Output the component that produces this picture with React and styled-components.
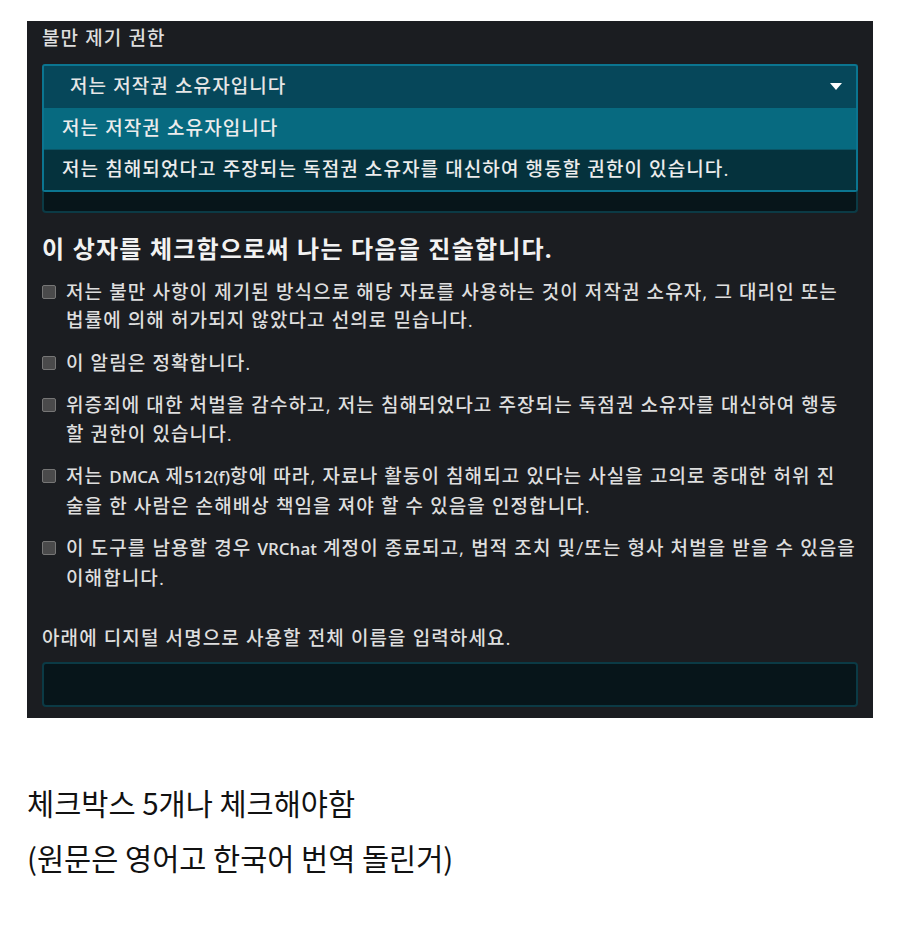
import styled, { createGlobalStyle } from "styled-components";

const GlobalStyle = createGlobalStyle`
  body {
    margin: 0;
    background: #ffffff;
  }
`;

const options = [
  "저는 저작권 소유자입니다",
  "저는 침해되었다고 주장되는 독점권 소유자를 대신하여 행동할 권한이 있습니다.",
];

export default function App() {
  const items = [
    <>
      저는 불만 사항이 제기된 방식으로 해당 자료를 사용하는 것이 저작권 소유자, 그 대리인 또는
      <br />
      법률에 의해 허가되지 않았다고 선의로 믿습니다.
    </>,
    "이 알림은 정확합니다.",
    <>
      위증죄에 대한 처벌을 감수하고, 저는 침해되었다고 주장되는 독점권 소유자를 대신하여 행동
      <br />할 권한이 있습니다.
    </>,
    <>
      저는 <Latin>DMCA</Latin> 제<Latin>512(f)</Latin>항에 따라, 자료나 활동이 침해되고 있다는 사실을 고의로 중대한 허위 진
      <br />
      술을 한 사람은 손해배상 책임을 져야 할 수 있음을 인정합니다.
    </>,
    <>
      이 도구를 남용할 경우 <Latin>VRChat</Latin> 계정이 종료되고, 법적 조치 및/또는 형사 처벌을 받을 수 있음을
      <br />
      이해합니다.
    </>,
  ];

  return (
    <>
      <GlobalStyle />
      <Panel>
        <Label>불만 제기 권한</Label>
        <SelectWrap>
          <SelectBox>
            <span>{options[0]}</span>
            <Caret />
          </SelectBox>
          <Menu>
            {options.map((o, i) => (
              <Option key={o} $active={i === 0}>
                {o}
              </Option>
            ))}
          </Menu>
          <HiddenField />
        </SelectWrap>

        <Heading>이 상자를 체크함으로써 나는 다음을 진술합니다.</Heading>
        <List>
          {items.map((t, i) => (
            <Item key={i}>
              <Box />
              <Text>{t}</Text>
            </Item>
          ))}
        </List>

        <SignLabel>아래에 디지털 서명으로 사용할 전체 이름을 입력하세요.</SignLabel>
        <Field />
      </Panel>

      <Caption>
        <p>체크박스 5개나 체크해야함</p>
        <p>(원문은 영어고 한국어 번역 돌린거)</p>
      </Caption>
    </>
  );
}

const Panel = styled.div`
  box-sizing: border-box;
  width: 846px;
  margin: 21px 0 0 27px;
  padding: 3px 15px 11px;
  background: #1b1d21;
  color: #dedede;
  font-family: "Open Sans", "Noto Sans CJK KR", sans-serif;
  font-size: 19px;
  font-weight: 500;
  letter-spacing: 1.1px;
  line-height: 28.5px;
`;

const Latin = styled.span`
  font-size: 17px;
  font-weight: 600;
  letter-spacing: 0;
`;

const Label = styled.div`
  margin-bottom: 11px;
`;

const SelectWrap = styled.div`
  position: relative;
`;

const SelectBox = styled.div`
  box-sizing: border-box;
  height: 44px;
  display: flex;
  align-items: center;
  justify-content: space-between;
  padding: 0 14px 0 26px;
  background: #06475a;
  border: 2px solid #0b7590;
  border-bottom: none;
  border-radius: 3px 3px 0 0;
  color: #e6e6e6;
`;

const Caret = styled.i`
  width: 0;
  height: 0;
  border-left: 6px solid transparent;
  border-right: 6px solid transparent;
  border-top: 7px solid #ffffff;
`;

const Menu = styled.div`
  position: absolute;
  top: 44px;
  left: 0;
  right: 0;
  z-index: 2;
  border: 2px solid #0b7590;
  border-top: none;
  border-radius: 0 0 3px 3px;
  overflow: hidden;
`;

const Option = styled.div`
  height: 41px;
  display: flex;
  align-items: center;
  padding-left: 18px;
  background: ${(p) => (p.$active ? "#076a80" : "#05323d")};
  border-top: ${(p) => (p.$active ? "none" : "1px solid #0a5566")};
  box-sizing: border-box;
  color: #ececec;
`;

const HiddenField = styled.div`
  box-sizing: border-box;
  height: 105px;
  background: #07151a;
  border: 2px solid #0b3a45;
  border-top: none;
  border-radius: 0 0 4px 4px;
`;

const Heading = styled.h2`
  margin: 20px 0 13px;
  font-size: 24px;
  font-weight: 700;
  letter-spacing: 1.2px;
  line-height: 32px;
  color: #f2f2f2;
`;

const List = styled.div`
  display: flex;
  flex-direction: column;
  gap: 14px;
`;

const Item = styled.label`
  display: flex;
  align-items: flex-start;
  gap: 10px;
`;

const Text = styled.span`
  white-space: nowrap;
`;

const Box = styled.span`
  flex: none;
  box-sizing: border-box;
  width: 14px;
  height: 14px;
  margin-top: 7px;
  background: #4a4a4b;
  border: 1px solid #767676;
  border-radius: 2px;
`;

const SignLabel = styled.div`
  margin: 32px 0 9px;
`;

const Field = styled.div`
  box-sizing: border-box;
  height: 45px;
  background: #07151a;
  border: 2px solid #0b3a45;
  border-radius: 4px;
`;

const Caption = styled.div`
  margin: 57px 0 0 27px;
  font-family: "Noto Sans CJK KR", sans-serif;
  font-size: 29.5px;
  font-weight: 400;
  line-height: 55px;
  color: #111111;

  p {
    margin: 0;
  }
`;
